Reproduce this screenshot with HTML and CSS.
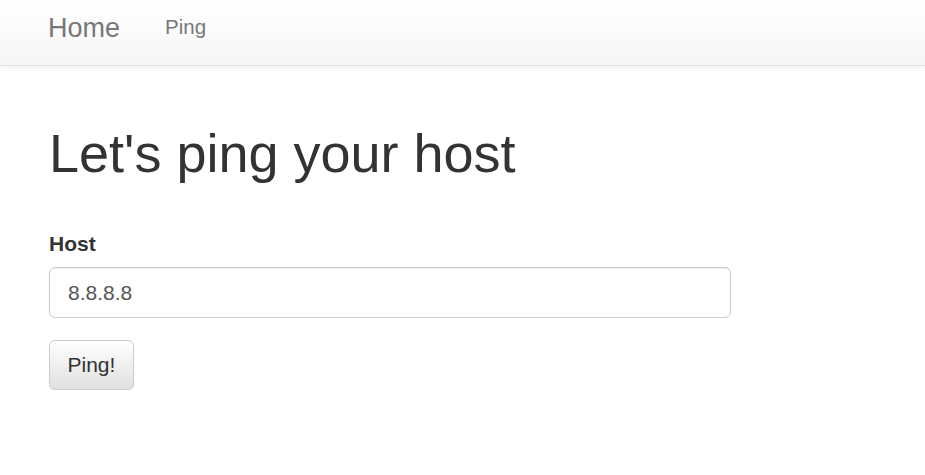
FILE: index.html
```html
<!DOCTYPE html>
<html>
<head>
<meta charset="utf-8">
<link rel="stylesheet" href="styles.css">
</head>
<body>
<nav class="navbar">
  <div class="nav-inner">
    <a class="brand" href="#">Home</a>
    <a class="nav-link" href="#">Ping</a>
  </div>
</nav>
<main class="container">
  <h1 class="title">Let's ping your host</h1>
  <form class="form">
    <div class="form-group">
      <label class="label" for="host">Host</label>
      <input class="input" id="host" type="text" value="8.8.8.8">
    </div>
    <button class="btn" type="button">Ping!</button>
  </form>
</main>
</body>
</html>
```
FILE: styles.css
```css
html, body {
  margin: 0;
  padding: 0;
  background: #fff;
}
body {
  font-family: "Liberation Sans", Arial, sans-serif;
  color: #333;
  font-size: 21px;
  line-height: 1.42857;
}
.navbar {
  height: 65px;
  border-bottom: 1px solid #e2e2e2;
  background: linear-gradient(to bottom, #fff 0, #f6f6f6 100%);
  box-shadow: 0 1px 5px rgba(0, 0, 0, 0.075);
}
.nav-inner {
  display: flex;
  align-items: center;
  height: 100%;
  padding-left: 48px;
}
.brand {
  color: #777;
  text-decoration: none;
  font-size: 27px;
  line-height: 1;
  margin-top: -8px;
}
.nav-link {
  color: #777;
  text-decoration: none;
  font-size: 20.5px;
  line-height: 1;
  margin-left: 45px;
  margin-top: -10px;
}
.container {
  padding-left: 49px;
}
.title {
  margin: 58px 0 0 0;
  font-size: 54px;
  font-weight: 400;
  line-height: 1.1;
  color: #333;
}
.form {
  margin-top: 46px;
}
.form-group {
  margin-bottom: 22px;
}
.label {
  display: inline-block;
  font-weight: 700;
  margin-bottom: 8px;
}
.input {
  display: block;
  box-sizing: border-box;
  width: 682px;
  height: 51px;
  padding: 9px 18px;
  font-family: "Liberation Sans", Arial, sans-serif;
  font-size: 21px;
  color: #555;
  border: 1px solid #ccc;
  border-radius: 6px;
  box-shadow: inset 0 1px 1px rgba(0, 0, 0, 0.075);
  outline: none;
}
.btn {
  display: block;
  box-sizing: border-box;
  height: 50px;
  padding: 9px 17.5px;
  font-family: "Liberation Sans", Arial, sans-serif;
  font-size: 21px;
  line-height: 1.42857;
  color: #333;
  border: 1px solid #ccc;
  border-radius: 6px;
  background: linear-gradient(to bottom, #fff 0, #e0e0e0 100%);
  box-shadow: inset 0 1px 0 rgba(255, 255, 255, 0.15), 0 1px 1px rgba(0, 0, 0, 0.075);
}
```
